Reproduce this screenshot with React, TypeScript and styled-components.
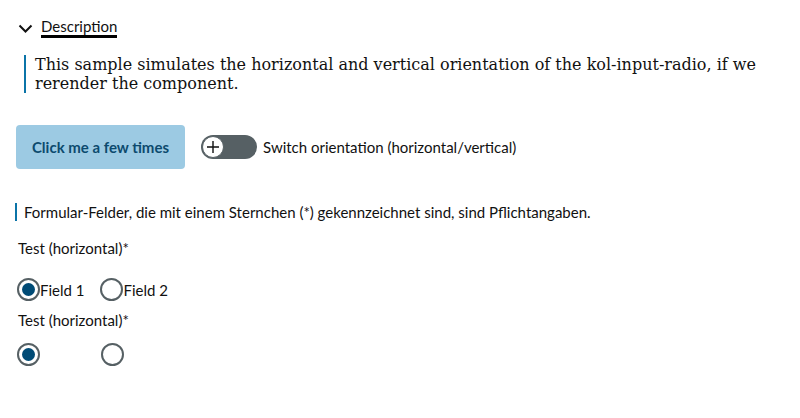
import React from "react";
import styled, { createGlobalStyle } from "styled-components";

const Global = createGlobalStyle`
  html, body { margin: 0; padding: 0; background: #fff; }
  body { font-family: "DejaVu Serif", serif; color: #202020; }
`;

const Page = styled.div`
  padding: 0 16px;
  width: 800px;
  box-sizing: border-box;
`;

const Summary = styled.div`
  display: flex;
  align-items: center;
  gap: 8px;
  padding-top: 18px;
  padding-left: 2px;
  height: 20px;
  font-family: "Lato", sans-serif;
  font-size: 15px;
  color: #111;
`;

const SummaryText = styled.span`
  border-bottom: 3px solid #000;
  line-height: 17px;
`;

const Quote = styled.div`
  margin: 17px 0 0 8px;
  border-left: 2px solid #0b74a8;
  padding-left: 9px;
  font-family: "DejaVu Serif", serif;
  font-size: 16px;
  line-height: 19px;
  color: #111;
`;

const Toolbar = styled.div`
  display: flex;
  align-items: center;
  margin-top: 32px;
`;

const Button = styled.button`
  height: 44px;
  width: 169px;
  border: 0;
  border-radius: 4px;
  background: #9ccae3;
  color: #0c4a6e;
  font-family: "Lato", sans-serif;
  font-weight: 700;
  font-size: 15px;
  padding: 0;
  cursor: pointer;
`;

const SwitchWrap = styled.label`
  display: flex;
  align-items: center;
  gap: 6px;
  margin-left: 16px;
  font-family: "Lato", sans-serif;
  font-size: 15px;
  color: #111;
`;

const Track = styled.span`
  position: relative;
  display: inline-block;
  width: 56px;
  height: 24px;
  border-radius: 12px;
  background: #566064;
`;

const Knob = styled.span`
  position: absolute;
  left: 1px;
  top: 1px;
  width: 22px;
  height: 22px;
  box-sizing: border-box;
  border-radius: 50%;
  background: #fff;
  border: 1.5px solid #566064;
  display: flex;
  align-items: center;
  justify-content: center;
`;

const Note = styled.div`
  margin-top: 34px;
  margin-left: -1px;
  border-left: 2px solid #0b74a8;
  padding-left: 7px;
  height: 18px;
  line-height: 18px;
  font-family: "Lato", sans-serif;
  font-size: 15px;
  color: #111;
`;

const Legend = styled.div<{ $top: number }>`
  margin-top: ${(p) => p.$top}px;
  margin-left: 2px;
  font-family: "Lato", sans-serif;
  font-size: 15px;
  line-height: 18px;
  color: #111;
`;

const RadioRow = styled.div<{ $gap: number; $top: number }>`
  display: flex;
  align-items: center;
  gap: ${(p) => p.$gap}px;
  margin-top: ${(p) => p.$top}px;
  margin-left: 1px;
`;

const Option = styled.label<{ $width?: number }>`
  display: flex;
  align-items: center;
  width: ${(p) => (p.$width ? `${p.$width}px` : "auto")};
  font-family: "Lato", sans-serif;
  font-size: 15px;
  color: #111;
`;

const Circle = styled.span<{ $checked?: boolean }>`
  width: 23px;
  height: 23px;
  box-sizing: border-box;
  border-radius: 50%;
  border: 2px solid #566064;
  background: #fff;
  display: flex;
  align-items: center;
  justify-content: center;
  flex: none;
  &::after {
    content: "";
    display: ${(p) => (p.$checked ? "block" : "none")};
    width: 13px;
    height: 13px;
    border-radius: 50%;
    background: #004b76;
  }
`;

const Chevron = () => (
  <svg width="15" height="14" viewBox="0 0 15 14">
    <path d="M1.5 4.5l6 6 6-6" fill="none" stroke="#111" strokeWidth="2" />
  </svg>
);

const Plus = () => (
  <svg width="14" height="14" viewBox="0 0 14 14">
    <path d="M7 1v12M1 7h12" stroke="#111" strokeWidth="1.4" />
  </svg>
);

export default function App() {
  return (
    <Page>
      <Global />
      <Summary>
        <Chevron />
        <SummaryText>Description</SummaryText>
      </Summary>
      <Quote>
        This sample simulates the horizontal and vertical orientation of the kol-input-radio, if we rerender the component.
      </Quote>
      <Toolbar>
        <Button>Click me a few times</Button>
        <SwitchWrap>
          <Track>
            <Knob>
              <Plus />
            </Knob>
          </Track>
          Switch orientation (horizontal/vertical)
        </SwitchWrap>
      </Toolbar>
      <Note>Formular-Felder, die mit einem Sternchen (*) gekennzeichnet sind, sind Pflichtangaben.</Note>
      <Legend $top={18}>Test (horizontal)*</Legend>
      <RadioRow $gap={16} $top={21}>
        <Option>
          <Circle $checked />
          Field 1
        </Option>
        <Option>
          <Circle />
          Field 2
        </Option>
      </RadioRow>
      <Legend $top={10}>Test (horizontal)*</Legend>
      <RadioRow $gap={0} $top={14}>
        <Option $width={84}>
          <Circle $checked />
        </Option>
        <Option>
          <Circle />
        </Option>
      </RadioRow>
    </Page>
  );
}
